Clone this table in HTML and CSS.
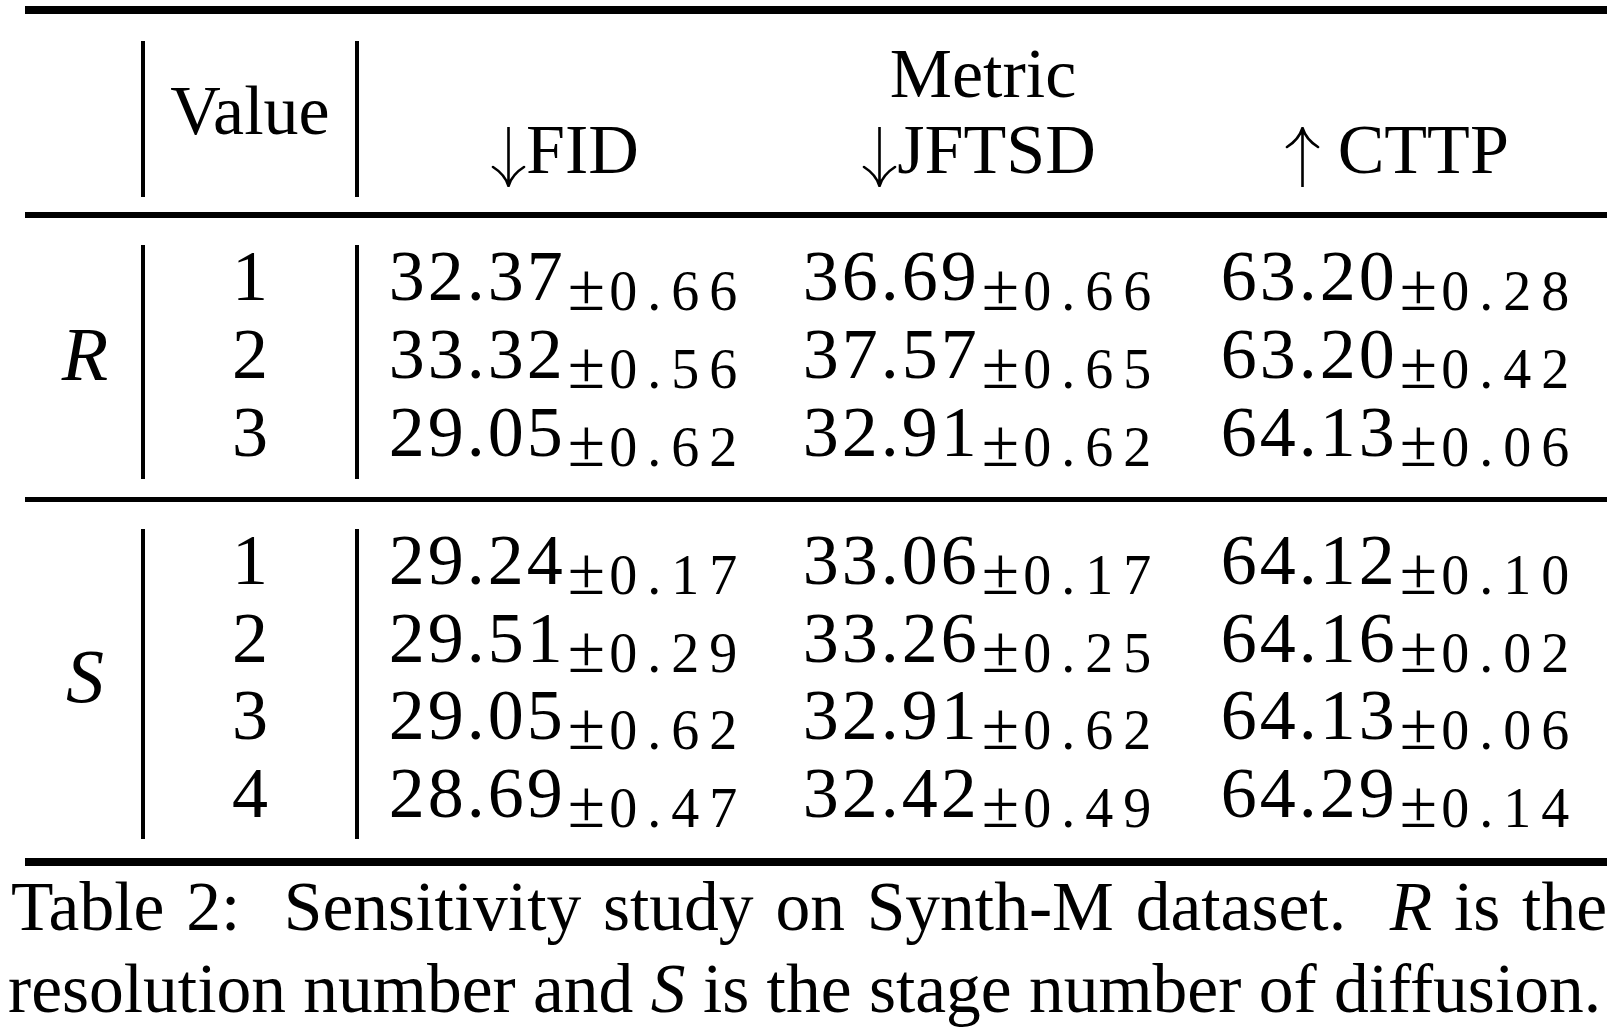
FILE: index.html
```html
<!DOCTYPE html>
<html lang="en">
<head>
<meta charset="utf-8">
<title>Table 2: Sensitivity study on Synth-M dataset</title>
<link rel="stylesheet" href="styles.css">
</head>
<body>
<div class="page">
  <div class="tbl">
    <div class="rule thick"></div>
    <div class="section head">
      <div class="grid head-grid">
        <div class="c1 span2"></div>
        <div class="c2 span2 value-h">Value</div>
        <div class="metric">Metric</div>
        <div class="h">
          <svg class="arr" viewBox="0 0 35 60" aria-hidden="true"><path d="M17.5 0V58M2 40C10 45 15 51 17.5 59C20 51 25 45 33 40"/></svg>FID
        </div>
        <div class="h">
          <svg class="arr" viewBox="0 0 35 60" aria-hidden="true"><path d="M17.5 0V58M2 40C10 45 15 51 17.5 59C20 51 25 45 33 40"/></svg>JFTSD
        </div>
        <div class="h">
          <svg class="arr" viewBox="0 0 35 60" aria-hidden="true"><path d="M17.5 60V2M2 20C10 15 15 9 17.5 1C20 9 25 15 33 20"/></svg> CTTP
        </div>
      </div>
    </div>
    <div class="rule mid"></div>
    <div class="section body-r">
      <div class="grid data-grid">
        <div class="c1 var var-r span3">R</div>
        <div class="c2 num">1</div>
        <div class="d">32.37<span class="sd"><span class="pm">±</span>0.66</span></div>
        <div class="d">36.69<span class="sd"><span class="pm">±</span>0.66</span></div>
        <div class="d">63.20<span class="sd"><span class="pm">±</span>0.28</span></div>
        <div class="c2 num">2</div>
        <div class="d">33.32<span class="sd"><span class="pm">±</span>0.56</span></div>
        <div class="d">37.57<span class="sd"><span class="pm">±</span>0.65</span></div>
        <div class="d">63.20<span class="sd"><span class="pm">±</span>0.42</span></div>
        <div class="c2 num">3</div>
        <div class="d">29.05<span class="sd"><span class="pm">±</span>0.62</span></div>
        <div class="d">32.91<span class="sd"><span class="pm">±</span>0.62</span></div>
        <div class="d">64.13<span class="sd"><span class="pm">±</span>0.06</span></div>
      </div>
    </div>
    <div class="rule sep"></div>
    <div class="section body-s">
      <div class="grid data-grid">
        <div class="c1 var var-s span4">S</div>
        <div class="c2 num">1</div>
        <div class="d">29.24<span class="sd"><span class="pm">±</span>0.17</span></div>
        <div class="d">33.06<span class="sd"><span class="pm">±</span>0.17</span></div>
        <div class="d">64.12<span class="sd"><span class="pm">±</span>0.10</span></div>
        <div class="c2 num">2</div>
        <div class="d">29.51<span class="sd"><span class="pm">±</span>0.29</span></div>
        <div class="d">33.26<span class="sd"><span class="pm">±</span>0.25</span></div>
        <div class="d">64.16<span class="sd"><span class="pm">±</span>0.02</span></div>
        <div class="c2 num">3</div>
        <div class="d">29.05<span class="sd"><span class="pm">±</span>0.62</span></div>
        <div class="d">32.91<span class="sd"><span class="pm">±</span>0.62</span></div>
        <div class="d">64.13<span class="sd"><span class="pm">±</span>0.06</span></div>
        <div class="c2 num">4</div>
        <div class="d">28.69<span class="sd"><span class="pm">±</span>0.47</span></div>
        <div class="d">32.42<span class="sd"><span class="pm">±</span>0.49</span></div>
        <div class="d">64.29<span class="sd"><span class="pm">±</span>0.14</span></div>
      </div>
    </div>
    <div class="rule thick"></div>
  </div>
  <div class="caption">
    <div class="cap-line first">Table 2:&nbsp; Sensitivity study on Synth-M dataset.&nbsp; <i>R</i> is the</div>
    <div class="cap-line last">resolution number and <i>S</i> is the stage number of diffusion.</div>
  </div>
</div>
</body>
</html>
```

FILE: styles.css
```css
html, body {
  margin: 0;
  padding: 0;
  background: #ffffff;
}

body {
  font-family: "Liberation Serif", "Times New Roman", serif;
  color: #000000;
  width: 1620px;
  height: 1027px;
  overflow: hidden;
}

.page {
  padding-top: 6px;
}

.tbl {
  margin-left: 25px;
  width: 1582px;
}

.rule {
  background: #000000;
}

.rule.thick {
  height: 8px;
}

.rule.mid {
  height: 6px;
}

.rule.sep {
  height: 5px;
}

.section.head {
  padding: 27px 0 15px;
}

.section.body-r {
  padding: 27px 0 18px;
}

.section.body-s {
  padding: 27px 0 19px;
}

.grid {
  display: grid;
  grid-template-columns: 120px 214px 412px 416px 420px;
}

.head-grid {
  grid-template-rows: 78px 78px;
  font-size: 70px;
  line-height: 62px;
}

.body-r .data-grid {
  grid-template-rows: repeat(3, 78px);
}

.body-s .data-grid {
  grid-template-rows: repeat(4, 77.5px);
}

.data-grid {
  font-size: 72px;
  line-height: 63px;
}

.c1 {
  grid-column: 1;
  border-right: 4px solid #000000;
}

.c2 {
  grid-column: 2;
  border-right: 4px solid #000000;
  text-align: center;
}

.span2 {
  grid-row: 1 / span 2;
}

.span3 {
  grid-row: 1 / span 3;
}

.span4 {
  grid-row: 1 / span 4;
}

.value-h {
  padding-top: 39px;
}

.metric {
  grid-column: 3 / span 3;
  grid-row: 1;
  text-align: center;
  padding-top: 2px;
}

.h {
  grid-row: 2;
  text-align: center;
  white-space: nowrap;
}

.arr {
  width: 35px;
  height: 60px;
  vertical-align: -14px;
  fill: none;
  stroke: #000000;
  stroke-width: 2.6;
  stroke-linecap: round;
}

.var {
  font-style: italic;
  font-size: 76px;
  text-align: center;
  padding-left: 4px;
}

.var-r {
  padding-top: 78px;
}

.var-s {
  padding-top: 116px;
}

.d {
  text-align: center;
  white-space: nowrap;
  letter-spacing: 3px;
  padding-left: 6px;
}

.num {
  letter-spacing: 0;
}

.sd {
  font-size: 56px;
  letter-spacing: 10px;
  vertical-align: -10px;
  line-height: 0;
  margin-left: 2px;
}

.pm {
  font-size: 68px;
  letter-spacing: 4px;
  line-height: 0;
}

.caption {
  margin-left: 8px;
  width: 1599px;
  font-size: 69.5px;
  line-height: 82px;
}

.cap-line {
  white-space: nowrap;
}

.cap-line.first {
  text-align: justify;
  text-align-last: justify;
  padding-left: 3px;
  white-space: normal;
}

.cap-line.last {
  text-align: left;
}
```
